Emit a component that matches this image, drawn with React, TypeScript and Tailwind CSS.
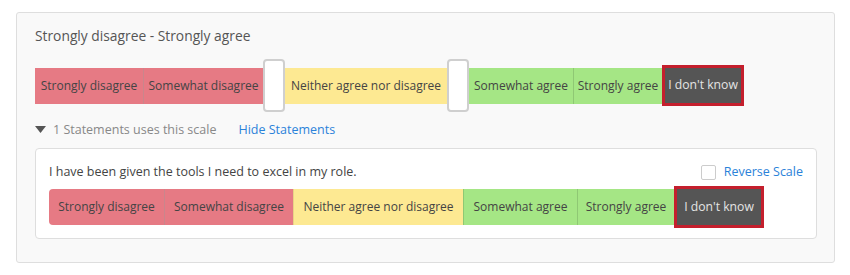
import React from 'react';

const topScale = [
  { label: 'Strongly disagree', tone: 'red' },
  { label: 'Somewhat disagree', tone: 'red' },
  { handle: true },
  { label: 'Neither agree nor disagree', tone: 'yellow' },
  { handle: true },
  { label: 'Somewhat agree', tone: 'green' },
  { label: 'Strongly agree', tone: 'green' },
];

const bottomScale = [
  { label: 'Strongly disagree', tone: 'red', w: 'w-[115px]' },
  { label: 'Somewhat disagree', tone: 'red', w: 'w-[129px]' },
  { label: 'Neither agree nor disagree', tone: 'yellow', w: 'w-[170px]' },
  { label: 'Somewhat agree', tone: 'green', w: 'w-[114px]' },
  { label: 'Strongly agree', tone: 'green', w: 'w-[97px]' },
];

const toneClass: Record<string, string> = {
  red: 'bg-[#e67a84] border-[#c9868c]',
  yellow: 'bg-[#fde992] border-[#e8d486]',
  green: 'bg-[#a5e685] border-[#8fc874]',
};

const topWidths = ['w-[108px]', 'w-[120px]', '', 'w-[162px]', '', 'w-[104px]', 'w-[89px]'];

export default function App() {
  return (
    <div className="w-[850px] h-[275px] bg-white pt-[12px] pl-[16px]" style={{ fontFamily: '"Open Sans", "Noto Sans", sans-serif' }}>
      <div className="w-[819px] h-[251px] bg-[#f9f9f9] border border-[#dedede] rounded-[3px] pl-[18px] pt-[13px]">
        <div className="text-[13.8px] text-[#555] leading-[20px] whitespace-nowrap">Strongly disagree - Strongly agree</div>

        <div className="flex items-center mt-[13px] h-[53px]">
          {topScale.map((s, i) =>
            s.handle ? (
              <div key={i} className="w-[22px] h-[53px] bg-white border-2 border-[#cfcfcf] rounded-[4px] shrink-0" />
            ) : (
              <div
                key={i}
                className={`${topWidths[i]} h-[36px] flex items-center justify-center text-[12px] text-[#444] whitespace-nowrap shrink-0 ${toneClass[s.tone!]} ${i === 1 || i === 6 ? 'border-l' : ''}`}
              >
                {s.label}
              </div>
            )
          )}
          <div className="w-[82px] h-[41px] border-[3px] border-[#c41f2d] bg-[#555] flex items-center justify-center text-[12.2px] text-[#e4e4e4] whitespace-nowrap shrink-0">
            I don't know
          </div>
        </div>

        <div className="flex items-center mt-[8px] h-[20px] text-[12.5px] whitespace-nowrap">
          <svg width="11" height="8" viewBox="0 0 11 8">
            <path d="M0 0 L11 0 L5.5 7 Z" fill="#555" />
          </svg>
          <span className="ml-[7px] text-[#888]">1 Statements uses this scale</span>
          <span className="ml-[22px] text-[#2b82d9]">Hide Statements</span>
        </div>

        <div className="mt-[8px] w-[782px] h-[91px] bg-white border border-[#dedede] rounded-[4px] pl-[13px] pr-[13px] pt-[14px]">
          <div className="flex items-center justify-between h-[18px]">
            <span className="text-[12.5px] text-[#444] whitespace-nowrap">I have been given the tools I need to excel in my role.</span>
            <div className="flex items-center">
              <span className="w-[15px] h-[15px] border border-[#ccc] rounded-[2px] bg-white" />
              <span className="ml-[8px] text-[12.5px] text-[#2b82d9] whitespace-nowrap">Reverse Scale</span>
            </div>
          </div>
          <div className="flex items-center mt-[5px] h-[42px]">
            {bottomScale.map((s, i) => (
              <div
                key={i}
                className={`${s.w} h-[36px] flex items-center justify-center text-[12px] text-[#444] whitespace-nowrap shrink-0 ${toneClass[s.tone]} ${i === 0 ? 'rounded-l-[4px]' : 'border-l'}`}
              >
                {s.label}
              </div>
            ))}
            <div className="w-[90px] h-[42px] border-[3px] border-[#c41f2d] bg-[#555] flex items-center justify-center text-[12.2px] text-[#e4e4e4] whitespace-nowrap shrink-0">
              I don't know
            </div>
          </div>
        </div>
      </div>
    </div>
  );
}
